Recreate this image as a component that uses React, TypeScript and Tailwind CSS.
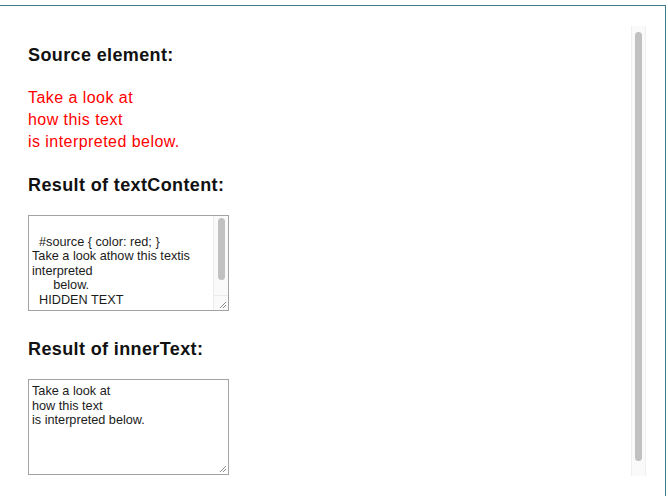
import React from 'react'

const sans = "font-['Liberation_Sans',Arial,sans-serif]"

function Resizer() {
  return (
    <svg width="9" height="9" viewBox="0 0 9 9" className="block">
      <path d="M8 2 L2 8 M8 5 L5 8" stroke="#8a8a8a" strokeWidth="1" />
    </svg>
  )
}

function TextBox({ text, scroll }: { text: string; scroll?: boolean }) {
  return (
    <div className="w-[201px] h-[96px] border border-[#a3a3a3] bg-white flex overflow-hidden">
      <div className="flex-1 px-[3px] pt-[4px] text-[12.7px] leading-[14.6px] text-[#1b1b1b] whitespace-pre overflow-hidden">
        {text}
      </div>
      {scroll ? (
        <div className="w-[15px] flex flex-col border-l border-[#ececec] bg-[#fafafa]">
          <div className="flex-1 pt-[2px] flex justify-center">
            <div className="w-[7px] h-[62px] rounded-full bg-[#c1c1c1]" />
          </div>
          <div className="h-[15px] border-t border-[#ececec] flex items-end justify-end pr-[1px] pb-[1px]">
            <Resizer />
          </div>
        </div>
      ) : (
        <div className="flex items-end pr-[1px] pb-[1px]">
          <Resizer />
        </div>
      )}
    </div>
  )
}

export default function App() {
  return (
    <div className={`w-[668px] h-[496px] bg-white pt-[5px] overflow-hidden ${sans}`}>
      <div className="w-[666px] h-[491px] border-t border-r border-[#3c7b8b] flex">
        {/* Page content */}
        <div className="flex-1 pl-[28px] pt-[39px]">
          <h3 className="text-[18px] font-bold leading-[21px] tracking-[0.38px] text-[#111]">Source element:</h3>
          <p className="mt-[21px] text-[16px] leading-[22px] tracking-[0.45px] text-[#ff0000]">
            Take a look at
            <br />
            how this text
            <br />
            is interpreted below.
          </p>

          <h3 className="mt-[22px] text-[18px] font-bold leading-[21px] tracking-[0.38px] text-[#111]">Result of textContent:</h3>
          <div className="mt-[19px]">
            <TextBox
              scroll
              text={'\n  #source { color: red; }\nTake a look athow this textis\ninterpreted\n      below.\n  HIDDEN TEXT'}
            />
          </div>

          <h3 className="mt-[28px] text-[18px] font-bold leading-[21px] tracking-[0.38px] text-[#111]">Result of innerText:</h3>
          <div className="mt-[19px]">
            <TextBox text={'Take a look at\nhow this text\nis interpreted below.'} />
          </div>
        </div>

        {/* Frame scrollbar */}
        <div className="pt-[20px] mr-[19px]">
          <div className="w-[15px] h-[450px] bg-[#fafafa] border-x border-[#efefef] flex justify-center pt-[6px]">
            <div className="w-[7px] h-[429px] rounded-full bg-[#c1c1c1]" />
          </div>
        </div>
      </div>
    </div>
  )
}
